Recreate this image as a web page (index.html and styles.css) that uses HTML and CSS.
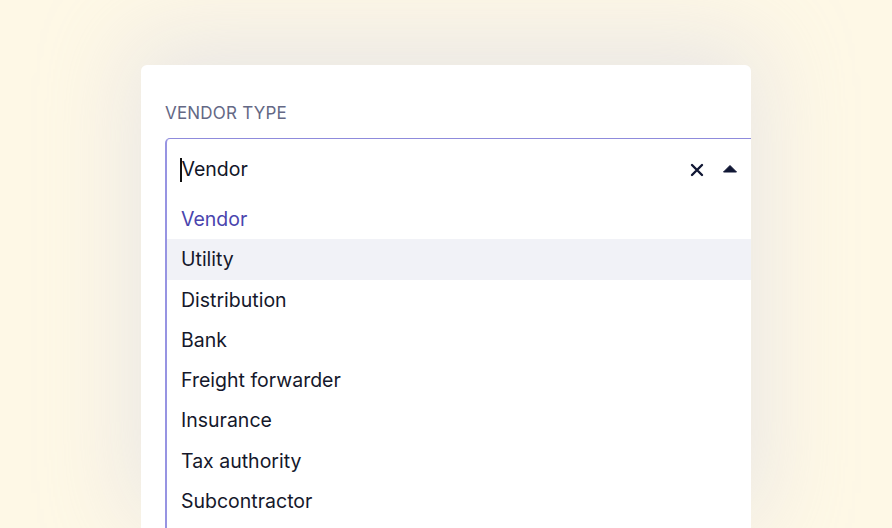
FILE: index.html
```html
<!DOCTYPE html>
<html>
<head>
<meta charset="utf-8">
<link rel="stylesheet" href="styles.css">
</head>
<body>
<div class="card">
  <div class="label">VENDOR TYPE</div>
  <div class="select">
    <div class="control">
      <div class="value"><span class="caret"></span>Vendor</div>
      <div class="icons">
        <svg class="clear" width="14" height="14" viewBox="0 0 14 14"><path d="M2 2 L12 12 M12 2 L2 12" stroke="#111734" stroke-width="2.4" stroke-linecap="round" fill="none"/></svg>
        <svg class="arrow" width="16" height="9" viewBox="0 0 16 9"><path d="M8 1.5 L14.5 8 L1.5 8 Z" fill="#111734" stroke="#111734" stroke-width="1" stroke-linejoin="round"/></svg>
      </div>
    </div>
    <ul class="menu">
      <li class="opt selected">Vendor</li>
      <li class="opt hover">Utility</li>
      <li class="opt">Distribution</li>
      <li class="opt">Bank</li>
      <li class="opt">Freight forwarder</li>
      <li class="opt">Insurance</li>
      <li class="opt">Tax authority</li>
      <li class="opt">Subcontractor</li>
    </ul>
  </div>
</div>
</body>
</html>
```

FILE: styles.css
```css
html, body {
  margin: 0;
  padding: 0;
  height: 528px;
  overflow: hidden;
  background: #fef8e6;
  font-family: "Inter", "Liberation Sans", sans-serif;
}
.card {
  margin: 65px 0 0 141px;
  width: 610px;
  height: 463px;
  background: #ffffff;
  border-radius: 6px 6px 0 0;
  box-shadow: 0 -15px 90px 10px rgba(200, 202, 228, 0.38);
  overflow: hidden;
  padding: 0 0 0 24px;
  box-sizing: border-box;
}
.label {
  padding-top: 38px;
  height: 35px;
  font-size: 17px;
  line-height: 20px;
  color: #646885;
  letter-spacing: 0.2px;
}
.select {
  width: 620px;
  border-top: 1px solid #8f8bdc;
  border-left: 2px solid #9794e2;
  border-top-left-radius: 5px;
}
.control {
  height: 60px;
  display: flex;
  align-items: center;
  padding-left: 12px;
  padding-right: 49px;
}
.value {
  flex: 1;
  font-size: 19.5px;
  color: #121628;
  display: flex;
  align-items: center;
}
.caret {
  width: 1.5px;
  height: 24px;
  background: #111;
  margin-left: 1px;
  position: relative;
  top: 1px;
}
.icons {
  display: flex;
  align-items: center;
  gap: 18px;
}
.clear { position: relative; top: 1px; }
.arrow { position: relative; top: -1px; }
.menu {
  list-style: none;
  margin: 0;
  padding: 0;
  min-height: 340px;
}
.opt {
  height: 40.3px;
  line-height: 40.3px;
  padding-left: 14px;
  font-size: 19.5px;
  color: #15182b;
}
.opt.selected { color: #4a45ae; }
.opt.hover { background: #f1f2f7; }
```
